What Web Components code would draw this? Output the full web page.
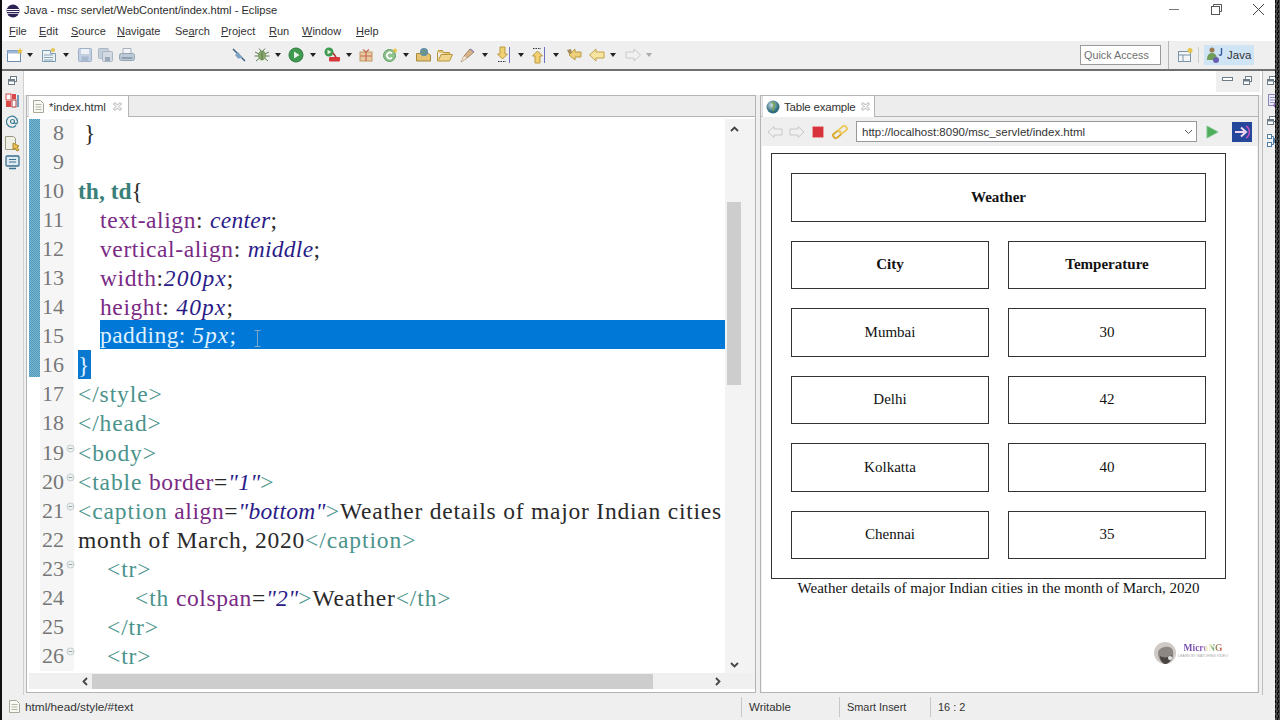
<!DOCTYPE html>
<html><head><meta charset="utf-8"><title>Eclipse</title>
<style>
html,body{margin:0;padding:0;height:720px;overflow:hidden;background:#efefef;font-family:"Liberation Sans",Arial,sans-serif;font-size:12px;color:#333}
</style></head><body>
<ec-window></ec-window>
<script>
const I={
 newf:'<svg width="20" height="16" viewBox="0 0 20 16"><rect x="1.500" y="3.500" width="13" height="11" fill="#fff" stroke="#6b8bb0"/><rect x="1.500" y="3.500" width="13" height="3" fill="#9db8d6"/><path d="M14 1l1 2 2 .3-1.500 1.500.4 2-1.900-1-1.900 1 .4-2L11 3.300 13 3z" fill="#e8c040"/></svg>',
 newp:'<svg width="18" height="16" viewBox="0 0 18 16"><path d="M1.500 3.500h8v3h5v8h-13z" fill="#eef3f6" stroke="#7d9bb0"/><path d="M3 8h9M3 10.500h9M3 13h9" stroke="#8aa5b8"/><circle cx="12" cy="3" r="2" fill="#e6c650"/></svg>',
 save:'<svg width="16" height="16" viewBox="0 0 16 16"><rect x="1.500" y="1.500" width="13" height="13" rx="1" fill="#c3d0e2" stroke="#9fb0c8"/><rect x="4" y="2" width="8" height="5" fill="#eef2f7"/><rect x="4.500" y="9.500" width="7" height="5" fill="#a9b9cf"/></svg>',
 saveall:'<svg width="18" height="16" viewBox="0 0 18 16"><rect x="1.500" y="1.500" width="10" height="10" rx="1" fill="#c5cfdb" stroke="#aab6c4"/><rect x="5.500" y="4.500" width="10" height="10" rx="1" fill="#d3dae3" stroke="#aab6c4"/><rect x="8" y="10" width="5" height="4" fill="#9aa8b8"/></svg>',
 print:'<svg width="18" height="16" viewBox="0 0 18 16"><path d="M5 7V1.500h8V7" fill="#f2f4f7" stroke="#a5b2c0"/><rect x="1.500" y="6.500" width="15" height="7" rx="2" fill="#bcc9d6" stroke="#93a3b3"/><rect x="3.500" y="10" width="11" height="2" fill="#8ea0b2"/></svg>',
 skip:'<svg width="16" height="16" viewBox="0 0 16 16"><path d="M2 2l12 12" stroke="#3f6080" stroke-width="1.500"/><path d="M4 8l3-3 5 6-5 .5z" fill="#7fa3c5"/></svg>',
 bug:'<svg width="18" height="16" viewBox="0 0 18 16"><ellipse cx="9" cy="8.500" rx="4" ry="5" fill="#86a56a"/><path d="M9 4v9M2 5l4 2M16 5l-4 2M1.500 9h4M16.500 9h-4M3 14l3-2.500M15 14l-3-2.500M6 1.500l2 2.500M12 1.500L10 4" stroke="#5f7f55" fill="none"/></svg>',
 run:'<svg width="16" height="16" viewBox="0 0 16 16"><circle cx="8" cy="8" r="7" fill="#3f9a4f"/><circle cx="8" cy="8" r="7" fill="none" stroke="#2e7a40"/><path d="M6 4.500l5.500 3.500L6 11.500z" fill="#e8f4e8"/></svg>',
 runext:'<svg width="18" height="16" viewBox="0 0 18 16"><circle cx="6" cy="5" r="4.500" fill="#3f9a4f"/><path d="M4.500 2.800L8.500 5l-4 2.200z" fill="#e8f4e8"/><rect x="6" y="10" width="11" height="4.500" rx="1" fill="#d63a3a"/><path d="M10 6l3 4" stroke="#a33" stroke-width="1.500"/></svg>',
 pkg:'<svg width="16" height="16" viewBox="0 0 16 16"><rect x="2" y="5" width="12" height="9" fill="#e8c8a0" stroke="#c09a68"/><path d="M2 9h12M8 5v9" stroke="#c86a50" stroke-width="1.200"/><path d="M5 2.500l3 2.500 3-2.500" fill="none" stroke="#c86a50" stroke-width="1.200"/></svg>',
 cls:'<svg width="16" height="16" viewBox="0 0 16 16"><circle cx="7.500" cy="8.500" r="6" fill="#8fc28f" stroke="#5fa065"/><path d="M10 6.300a3 3 0 1 0 0 4.400" fill="none" stroke="#fff" stroke-width="1.600"/><path d="M13 .8l.8 1.700 1.800.2-1.300 1.300.3 1.800-1.600-.9-1.600.9.300-1.800-1.300-1.300 1.800-.2z" fill="#e6c040"/></svg>',
 globefolder:'<svg width="18" height="16" viewBox="0 0 18 16"><path d="M1.500 6.500h12l2 1.500v6h-14z" fill="#e4c472" stroke="#a98a3c"/><circle cx="9" cy="5" r="4" fill="#5f8fa8"/><path d="M6 3.500c2 1 3 0 5-.5M6 6c2 1 4 0 5 0" stroke="#7da25a" fill="none"/></svg>',
 folder:'<svg width="18" height="16" viewBox="0 0 18 16"><path d="M1.500 5.500v8.500h12l3-6.500H5l-2 5" fill="#f0d58a" stroke="#b49440"/><path d="M1.500 5.500l1-2h4l1 2h6v2" fill="#e8c870" stroke="#b49440"/></svg>',
 pen:'<svg width="18" height="16" viewBox="0 0 18 16"><path d="M2 15l3-6 6-7 4 3-7 6z" fill="#d8b48a" stroke="#a88660"/><path d="M2 15l3-6 3 2z" fill="#efe2d0"/><path d="M11 2l4 3" stroke="#8f8fb0" stroke-width="1.500"/></svg>',
 down:'<svg width="16" height="18" viewBox="0 0 16 18"><path d="M5 1h5v7h2.500L7.500 13 2.500 8H5z" fill="#f0d070" stroke="#bb9a3c"/><path d="M3 15.500h8" stroke="#333" stroke-dasharray="1.500 1"/><path d="M14.500 1v16" stroke="#7070c0"/></svg>',
 up:'<svg width="16" height="18" viewBox="0 0 16 18"><path d="M5 17h5v-7h2.500L7.500 5 2.500 10H5z" fill="#f0d070" stroke="#bb9a3c"/><path d="M3 2.500h8" stroke="#333" stroke-dasharray="1.500 1"/><path d="M14.500 1v16" stroke="#7070c0"/></svg>',
 last:'<svg width="18" height="16" viewBox="0 0 18 16"><path d="M9 2L3 8l6 5V10h6V5H9z" fill="#efd07a" stroke="#b99a45"/><path d="M1 3l4-1 1 4-3 1z" fill="#a88a5a"/></svg>',
 back:'<svg width="18" height="16" viewBox="0 0 18 16"><path d="M8 2L1.500 8 8 14v-3h8V5H8z" fill="#f6e4a0" stroke="#c4a24a"/></svg>',
 fwd:'<svg width="18" height="16" viewBox="0 0 18 16"><path d="M10 2l6.500 6L10 14v-3H2V5h8z" fill="#f1f1f1" stroke="#c9c9c9"/></svg>',
 bback:'<svg width="16" height="14" viewBox="0 0 16 14"><path d="M7 1.500L1 7l6 5.500V10h8V4H7z" fill="#f0f0f0" stroke="#c8c8c8"/></svg>',
 bfwd:'<svg width="16" height="14" viewBox="0 0 16 14"><path d="M9 1.500L15 7l-6 5.500V10H1V4h8z" fill="#f0f0f0" stroke="#c8c8c8"/></svg>',
 stop:'<svg width="14" height="14" viewBox="0 0 14 14"><rect x="1.500" y="1.500" width="11" height="11" rx="1" fill="#d8323c" stroke="#e8a0a0"/></svg>',
 refresh:'<svg width="18" height="16" viewBox="0 0 18 16"><rect x="2" y="8" width="8" height="5" rx="2" transform="rotate(-38 6 10.500)" fill="none" stroke="#d8ac30" stroke-width="2"/><rect x="8" y="3" width="8" height="5" rx="2" transform="rotate(-38 12 5.500)" fill="none" stroke="#ecca60" stroke-width="2"/></svg>',
 go:'<svg width="14" height="14" viewBox="0 0 14 14"><path d="M2 1l11 6-11 6z" fill="#4fae5c" stroke="#7cc488"/></svg>',
 ext:'<svg width="20" height="20" viewBox="0 0 20 20"><rect width="20" height="20" fill="#24479c"/><path d="M3 10h9M9 5.500L14 10l-5 4.500" fill="none" stroke="#f0d8f4" stroke-width="2"/><path d="M14 4a7 7 0 0 1 0 12" fill="none" stroke="#c050c0" stroke-width="1.500"/></svg>',
 persp:'<svg width="16" height="16" viewBox="0 0 16 16"><rect x="1.500" y="4.500" width="12" height="10" fill="#f4f6f8" stroke="#7b95aa"/><path d="M1.500 8h12M6 8v6.500" stroke="#7b95aa"/><circle cx="13" cy="3.500" r="2.500" fill="#e6c650"/></svg>',
 java:'<svg width="20" height="18" viewBox="0 0 20 18"><circle cx="6" cy="4" r="2.500" fill="#9a7a50"/><path d="M1 14c0-5 2-7 5-7s5 2 5 7z" fill="#6f9e58"/><circle cx="10" cy="14" r="3" fill="#6a5fb0"/><path d="M15.500 2v6c0 1.500-2 1.500-2.500.5" fill="none" stroke="#3a5a9a" stroke-width="1.400"/></svg>',
 doc:'<svg width="13" height="15" viewBox="0 0 13 15"><path d="M1.500 1.500h7l3 3v9h-10z" fill="#f8f8f4" stroke="#a8a89a"/><path d="M3.500 5.500h6M3.500 8h6M3.500 10.500h6" stroke="#b5b5a5"/></svg>',
 close:'<svg width="11" height="11" viewBox="0 0 11 11"><path d="M1.500 3L3 1.500l2.500 2.500L8 1.500 9.500 3 7 5.500 9.500 8 8 9.500 5.500 7 3 9.500 1.500 8 4 5.500z" fill="#f6f6f6" stroke="#b0b0b0"/></svg>',
 globe:'<svg width="14" height="14" viewBox="0 0 14 14"><defs><radialGradient id="g" cx=".4" cy=".35"><stop offset="0" stop-color="#c9dde0"/><stop offset="1" stop-color="#2f6f80"/></radialGradient></defs><circle cx="7" cy="7" r="6.500" fill="url(#g)"/><path d="M6 2c2 1 3 2 2 4-1 1 0 3-1 5" stroke="#7aa24a" stroke-width="1.500" fill="none"/></svg>',
 eclipse:'<svg width="14" height="14" viewBox="0 0 14 14"><circle cx="7" cy="7" r="6.500" fill="#2c2255"/><path d="M.8 5.500h12.400M.6 7.500h12.800" stroke="#fff"/><path d="M1 9.500h12" stroke="#e8e8f0" stroke-width=".8"/></svg>',
 restore:'<svg width="11" height="11" viewBox="0 0 11 11"><rect x="3.500" y="1.500" width="6" height="5" fill="#fff" stroke="#6c7c88"/><rect x="1.500" y="4.500" width="6" height="5" fill="#fff" stroke="#6c7c88"/><path d="M1.500 5.500h6" stroke="#6c7c88" stroke-width="2"/></svg>',
 minv:'<svg width="11" height="8" viewBox="0 0 11 8"><rect x=".5" y="1.500" width="10" height="3" fill="#fff" stroke="#6c7c88"/></svg>',
 t1:'<svg width="15" height="15" viewBox="0 0 15 15"><rect x="1" y="1" width="5" height="6" fill="#fff" stroke="#d84848"/><rect x="7" y="1" width="4" height="5" fill="#d84848"/><rect x="1" y="8" width="5" height="6" fill="#d84848"/><rect x="7" y="7" width="4" height="7" fill="#fff" stroke="#b03838"/><path d="M13 2v12" stroke="#4a7fa8" stroke-width="1.500"/></svg>',
 t2:'<svg width="13" height="13" viewBox="0 0 13 13"><path d="M10 10.500a5.500 5.500 0 1 1 1.500-4c0 3-3 3-3 .5" fill="none" stroke="#3a7d94" stroke-width="1.200"/><circle cx="6.500" cy="6.500" r="2" fill="none" stroke="#3a7d94" stroke-width="1.200"/></svg>',
 t3:'<svg width="17" height="17" viewBox="0 0 17 17"><path d="M1.500 1.500h8l2 2v11h-10z" fill="#eef0e8" stroke="#9a9a80"/><path d="M9 8l6 3-2 1 2 3-2 1-2-3-2 2z" fill="#e8c050" stroke="#b08a30"/></svg>',
 t4:'<svg width="15" height="15" viewBox="0 0 15 15"><rect x="1" y="1" width="13" height="10" rx="1" fill="#dfe9f1" stroke="#3a7090" stroke-width="1.300"/><path d="M4 4.500h7M4 7h7" stroke="#3a7090"/><path d="M4 13.500h7" stroke="#3a7090" stroke-width="1.500"/></svg>',
 r1:'<svg width="14" height="15" viewBox="0 0 14 15"><rect x="2.500" y="1.500" width="9" height="11" fill="#eaeaf6" stroke="#8a88b8"/><path d="M4 4.500h6M4 7h6M4 9.500h6" stroke="#9a98c8"/><circle cx="10" cy="12" r="2.500" fill="#a060c0"/></svg>',
 r2:'<svg width="14" height="15" viewBox="0 0 14 15"><rect x="1.500" y="1.500" width="4" height="4" fill="#fff" stroke="#5080a8"/><rect x="1.500" y="9.500" width="4" height="4" fill="#fff" stroke="#5080a8"/><rect x="8.500" y="5.500" width="4" height="4" fill="#fff" stroke="#5080a8"/><path d="M5.500 3.500h2v8h-2M7.500 7.500h1" fill="none" stroke="#5080a8"/></svg>'
};
function def(name,html,init){customElements.define(name,class extends HTMLElement{constructor(){super();this.attachShadow({mode:'open'}).innerHTML=typeof html==='function'?html(this):html;if(init)init(this)}})}
def('ec-icon',e=>`<style>:host{display:inline-flex;align-items:center;justify-content:center;flex:none}svg{display:block}</style>${I[e.getAttribute('n')]||''}`);
def('ec-drop','<style>:host{display:inline-block;flex:none;width:0;height:0;border:3.500px solid transparent;border-top:4px solid #222;border-bottom:0}:host([off]){border-top-color:#aaa}</style>');

def('ec-titlebar',`<style>:host{display:flex;align-items:center;height:20px;background:#fff;font-size:11.100px;color:#2c2c2c;padding:1px 0 0 4px;box-sizing:border-box}
span{margin-left:4px;flex:1;padding-bottom:1px}
.w{display:flex;align-items:center;margin-right:1px}.b{width:42px;display:flex;justify-content:center;margin-top:-3px}</style>
<ec-icon n="eclipse"></ec-icon><span>Java - msc servlet/WebContent/index.html - Eclipse</span>
<div class="w">
<div class="b"><svg width="11" height="11" viewBox="0 0 11 11"><path d="M0 5.500h10" stroke="#777"/></svg></div>
<div class="b"><svg width="11" height="11" viewBox="0 0 11 11"><path d="M2.500 2.500V.5h8v7h-2" fill="none" stroke="#555"/><rect x=".5" y="2.500" width="8" height="8" fill="none" stroke="#555"/></svg></div>
<div class="b"><svg width="13" height="13" viewBox="0 0 13 13"><path d="M1 1l11 11M12 1L1 12" stroke="#444"/></svg></div>
</div>`);

def('ec-menubar',`<style>:host{display:flex;align-items:center;height:21px;background:#fff;font-size:11px;color:#333;padding-left:7px;box-sizing:border-box}u{text-decoration-thickness:1px;text-underline-offset:1px}span{flex:none}</style>
<span style="width:30px"><u>F</u>ile</span><span style="width:32px"><u>E</u>dit</span><span style="width:46px"><u>S</u>ource</span><span style="width:58px"><u>N</u>avigate</span><span style="width:46px">Se<u>a</u>rch</span><span style="width:48px"><u>P</u>roject</span><span style="width:33px"><u>R</u>un</span><span style="width:54px"><u>W</u>indow</span><span><u>H</u>elp</span>`);

const TB=[['newf',21],['d',14],['newp',22],['d',14],['save',20],['saveall',21],['print',113],['skip',22],['bug',22],['d',13],['run',22],['d',13],['runext',23],['d',12],['pkg',24],['cls',21],['d',12],['globefolder',21],['folder',23],['pen',23],['d',13],['down',23],['d',12],['up',23],['d',13],['last',22],['back',22],['d',14],['fwd',22],['dx',10]];
def('ec-toolbar',`<style>:host{display:flex;align-items:center;height:28px;background:#efefef;border-bottom:2px solid #6f6f6f;box-sizing:content-box;padding-left:4px;padding-right:26px}
.c{flex:none;display:flex;align-items:center}.r{margin-left:auto;display:flex;align-items:center;height:100%}
.q{width:76px;height:18px;border:1px solid #9a9a9a;background:#fff;font-size:10.800px;color:#6f6f6f;display:flex;align-items:center;padding-left:3px;margin-top:-1px}
.v{width:1px;height:100%;background:#b5b5b5;margin:0 8px 0 7px}
.j{display:flex;align-items:center;gap:1px;background:#cfe4f5;height:20px;width:50px;padding-left:2px;box-sizing:border-box;color:#333;font-size:11.500px;margin-left:5px}
.s{width:1px;height:16px;background:#ccc;margin-left:5px}</style>
${TB.map(([n,w])=>`<div class="c" style="width:${w}px">${n==='d'?'<ec-drop></ec-drop>':n==='dx'?'<ec-drop off></ec-drop>':`<ec-icon n="${n}"></ec-icon>`}</div>`).join('')}
<div class="r"><div class="q">Quick Access</div><div class="v"></div><ec-icon n="persp"></ec-icon><div class="s"></div><div class="j"><ec-icon n="java"></ec-icon>Java</div></div>`);

def('ec-trim',`<style>:host{display:flex;flex-direction:column;align-items:center;gap:7px;padding-top:4px;background:#efefef;box-sizing:border-box;border-right:1px solid #cfcfcf}:host([r]){border-right:0;border-left:1px solid #bdbdbd;align-items:flex-start;padding-left:3px}</style><slot></slot>`);

def('ec-tabfolder',e=>`<style>:host{display:flex;flex-direction:column;border:1px solid #b4b4b4;box-sizing:border-box;background:#f0f0f0;min-height:0;min-width:0}
.head{display:flex;height:21px;background:#ededed;border-bottom:1px solid #b4b4b4;box-sizing:border-box;flex:none;padding-left:1px}
.tab{display:flex;align-items:center;gap:4px;background:#fff;height:21px;padding:0 5px 0 3px;border-right:1px solid #b4b4b4;box-sizing:border-box;font-size:11.500px;color:#333;border-left:1px solid #ddd;white-space:nowrap;flex:none}
.body{flex:1;min-height:0;display:flex;flex-direction:column}</style>
<div class="head"><div class="tab" style="width:${e.getAttribute('tw')}px"><ec-icon n="${e.getAttribute('ic')}"></ec-icon><span style="letter-spacing:${e.getAttribute('ls')||0}px">${e.getAttribute('label')}</span><ec-icon n="close" style="margin-left:auto"></ec-icon></div></div>
<div class="body"><slot></slot></div>`);

const LINES=[
 [8,'',6,'}'],
 [9,'',0,''],
 [10,'',0,'<span class="tb">th, td</span><span class="br">{</span>'],
 [11,'',22,'<span class="a">text-align</span>: <i>center</i>;'],
 [12,'',22,'<span class="a">vertical-align</span>: <i>middle</i>;'],
 [13,'',22,'<span class="a">width</span>:<i class="w">200px</i>;'],
 [14,'',22,'<span class="a">height</span>: <i class="w">40px</i>;'],
 [15,'sel',22,'padding: <i class="w">5px</i>;'],
 [16,'end',0,'<mark>}</mark>'],
 [17,'',0,'<span class="t">&lt;/style&gt;</span>'],
 [18,'',0,'<span class="t">&lt;/head&gt;</span>'],
 [19,'f',0,'<span class="t">&lt;body&gt;</span>'],
 [20,'f',0,'<span class="t">&lt;table</span> <span class="a">border</span>=<i>"1"</i><span class="t">&gt;</span>'],
 [21,'f',0,'<span class="t">&lt;caption</span> <span class="a">align</span>=<i>"bottom"</i><span class="t">&gt;</span>Weather details of major Indian cities'],
 [22,'',0,'month of March, 2020<span class="t">&lt;/caption&gt;</span>'],
 [23,'f',29,'<span class="t">&lt;tr&gt;</span>'],
 [24,'',57,'<span class="t">&lt;th</span> <span class="a">colspan</span>=<i>"2"</i><span class="t">&gt;</span>Weather<span class="t">&lt;/th&gt;</span>'],
 [25,'',29,'<span class="t">&lt;/tr&gt;</span>'],
 [26,'f',29,'<span class="t">&lt;tr&gt;</span>']
];
def('ec-code',`<style>:host{display:block;font-family:"Liberation Serif","Times New Roman",serif;font-size:23.500px;letter-spacing:.78px;color:#2a2a2a;overflow:hidden;flex:1;min-width:0;font-variant-numeric:oldstyle-nums}
.l{display:flex;height:29.050px;line-height:28px;white-space:pre}
.n{width:24px;flex:none;color:#777;text-align:right;background:#f6f6f6;letter-spacing:0;font-size:22px}
.f{width:14px;flex:none;position:relative;background:linear-gradient(90deg,#f6f6f6 10px,#fff 10px)}
.f svg{position:absolute;left:2px;top:5px}
.x{flex:1;min-width:0;overflow:hidden;position:relative}
.tb{color:#3a7f7a;font-weight:bold;letter-spacing:0}.br{letter-spacing:0}.t{color:#4a938b;letter-spacing:.9px}.a{color:#7a2a85;letter-spacing:.6px}i{color:#2a1c88;font-style:italic;letter-spacing:.3px}
i.w{letter-spacing:1.100px}
.sel{background:#0078d7;color:#dff1ff;position:absolute;left:22px;right:0;top:-2px;height:29px;line-height:30px;letter-spacing:.45px}
.sel i{color:#dff1ff}
.cur{position:absolute;left:154px;top:10px}
mark{background:#0a78cf;color:#dff1ff;display:inline-block;padding:1px 2px 0 0;line-height:28px;position:relative;top:-1px;letter-spacing:0}
.x.s{overflow:visible}
</style><div id="c"></div>`,e=>{
 e.shadowRoot.getElementById('c').innerHTML=LINES.map(([n,k,ind,h])=>{
  const fold=k==='f'?'<svg width="9" height="9" viewBox="0 0 9 9"><circle cx="4.500" cy="4.500" r="3.500" fill="#eef1f1" stroke="#c4cccc"/><path d="M2.500 4.500h4" stroke="#99a5a5"/></svg>':'';
  const body=k==='sel'?`<div class="sel">${h}<svg class="cur" width="7" height="17" viewBox="0 0 7 17"><path d="M.5.500h6M3.500.500v16M.5 16.500h6" stroke="#7fa8c8" fill="none"/></svg></div>`:`<span style="padding-left:${ind}px">${h}</span>`;
  return `<div class="l"><div class="n">${n}</div><div class="f">${fold}</div><div class="x${k==='sel'||k==='end'?' s':''}">${body}</div></div>`;
 }).join('');
});
def('ec-sbv',`<style>:host{display:flex;flex-direction:column;width:30px;flex:none;background:#f3f3f3;box-sizing:border-box;padding-right:14px}
.a{height:20px;display:flex;align-items:center;justify-content:center;flex:none;padding-left:2px}
.a.b{height:16px;margin-top:auto}
.sp{flex:none;height:63px}.th{height:183px;width:14px;background:#cdcdcd;flex:none;margin-left:2px}</style>
<div class="a"><svg width="9" height="6" viewBox="0 0 9 6"><path d="M1 5l3.500-3.500L8 5" fill="none" stroke="#444" stroke-width="1.800"/></svg></div>
<div class="sp"></div><div class="th"></div>
<div class="a b"><svg width="9" height="6" viewBox="0 0 9 6"><path d="M1 1l3.500 3.500L8 1" fill="none" stroke="#444" stroke-width="1.800"/></svg></div>`);
def('ec-sbh',`<style>:host{display:flex;align-items:center;height:16px;background:#f0f0f0;flex:none}
.pad{width:49px;flex:none}.a{width:14px;display:flex;justify-content:center;flex:none}
.th{width:561px;height:15px;background:#cdcdcd;flex:none}.f{flex:1}</style>
<div class="pad"></div><div class="a"><svg width="6" height="9" viewBox="0 0 6 9"><path d="M5 1L1.500 4.500 5 8" fill="none" stroke="#444" stroke-width="1.800"/></svg></div>
<div class="th"></div><div class="f"></div><div class="a" style="margin-right:30px"><svg width="6" height="9" viewBox="0 0 6 9"><path d="M1 1l3.500 3.500L1 8" fill="none" stroke="#444" stroke-width="1.800"/></svg></div>`);

def('ec-editor',`<style>:host{display:flex;flex-direction:column;flex:1;min-height:0;background:#fff;padding:2px 0 3px 2px;box-sizing:border-box}
.m{flex:1;min-height:0;display:flex;background:#fff}
.ruler{width:11px;flex:none;height:258px;background:#5fa5c5;background-image:repeating-conic-gradient(#7ab8d0 0 25%,#4f98bb 0 50%);background-size:2px 2px}
.wrap{flex:1;display:flex;min-width:0;min-height:0;overflow:hidden}</style>
<div class="m"><div class="ruler"></div><div class="wrap"><ec-code></ec-code><ec-sbv></ec-sbv></div></div><ec-sbh></ec-sbh>`);

def('ec-url',`<style>:host{display:flex;align-items:center;height:19px;border:1px solid #999;background:#fff;font-size:11.500px;color:#333;padding-left:5px;box-sizing:content-box;flex:none;width:334px}span{flex:1}</style>
<span>http://localhost:8090/msc_servlet/index.html</span><svg width="9" height="6" viewBox="0 0 9 6" style="margin-right:3px"><path d="M1 1l3.500 3.500L8 1" fill="none" stroke="#555"/></svg>`);

def('ec-weather',`<style>:host{display:block;font-family:"Liberation Serif","Times New Roman",serif;font-size:15.040px;color:#111}
table{border:1px solid #333;border-spacing:19px;border-collapse:separate;width:455px;table-layout:fixed;box-sizing:border-box}
td,th{border:1px solid #333;height:48.500px;padding:0;text-align:center;vertical-align:middle;box-sizing:border-box}
.cap{width:455px;text-align:center;white-space:nowrap;margin-top:1px}</style>
<table><tr><th colspan="2">Weather</th></tr><tr><th>City</th><th>Temperature</th></tr>
<tr><td>Mumbai</td><td>30</td></tr><tr><td>Delhi</td><td>42</td></tr><tr><td>Kolkatta</td><td>40</td></tr><tr><td>Chennai</td><td>35</td></tr></table>
<div class="cap">Weather details of major Indian cities in the month of March, 2020</div>`);

def('ec-logo',`<style>:host{display:flex;align-items:center;gap:2px;position:absolute;right:29px;bottom:27px}
.t{display:flex;flex-direction:column;align-items:center;font-family:"Liberation Serif",serif;line-height:1;margin-top:-3px}
.m{font-size:9.500px;font-weight:bold;background:linear-gradient(90deg,#6a48a8 0,#8a58b8 52%,#f2ecb0 60%,#f2ecb0 68%,#78b878 75%,#d04848 100%);-webkit-background-clip:text;background-clip:text;color:transparent}
.s{font-size:3.600px;color:#a8a8a8;margin-top:2px;white-space:nowrap;font-family:"Liberation Sans",sans-serif}</style>
<svg width="22" height="24" viewBox="0 0 22 24"><circle cx="11" cy="12" r="11" fill="#cfcac6"/><path d="M4 12c0-7 14-9 15-2 1 5-1 12-7 13-4 0-8-5-8-11z" fill="#8d8783"/><path d="M6 15c3 2 8 2 12-1-1 6-4 9-7 9-3-1-5-4-5-8z" fill="#4a4542"/><circle cx="16" cy="17" r="2" fill="#e8e8e8"/></svg>
<div class="t"><div class="m">MicroNG</div><div class="s">LEARN BY WATCHING VIDEO</div></div>`);

def('ec-browser',`<style>:host{display:flex;flex-direction:column;flex:1;min-height:0;position:relative}
.tb{display:flex;align-items:center;height:29px;background:#efefef;flex:none;padding-left:6px;box-sizing:border-box}
.tb ec-icon{margin-right:6px}
.pg{flex:1;min-height:0;background:#fff;margin:0 1px 0 1px;padding:7px 0 0 9px;position:relative}</style>
<div class="tb"><ec-icon n="bback"></ec-icon><ec-icon n="bfwd"></ec-icon><ec-icon n="stop"></ec-icon><ec-icon n="refresh" style="margin-right:7px"></ec-icon><ec-url></ec-url><ec-icon n="go" style="margin:0 0 0 8px"></ec-icon><ec-icon n="ext" style="margin:0 0 0 13px"></ec-icon></div>
<div class="pg"><ec-weather></ec-weather><ec-logo></ec-logo></div>`);

def('ec-status',`<style>:host{display:flex;align-items:center;height:25px;background:#efefef;font-size:11.500px;color:#333;padding:0 0 2px 6px;box-sizing:border-box}
.h{display:flex;align-items:center;gap:4px;width:733px;flex:none;font-size:11.800px}
.c{border-left:1px solid #c8c8c8;height:20px;display:flex;align-items:center;padding-left:7px;box-sizing:border-box;flex:none}</style>
<div class="h"><ec-icon n="doc"></ec-icon>html/head/style/#text</div>
<div class="c" style="width:98px">Writable</div><div class="c" style="width:91px;font-size:10.900px">Smart Insert</div><div class="c" style="font-size:10.900px">16 : 2</div>`);

def('ec-window',`<style>:host{display:flex;flex-direction:column;width:1280px;height:720px;background:#efefef;position:relative;box-sizing:border-box;border-left:2px solid #111;overflow:hidden}
.main{flex:1;min-height:0;display:grid;grid-template-columns:22px 1fr 18px;background:#efefef}
.center{display:flex;flex-direction:column;min-width:0;min-height:0;background:#fff}
.mm{display:flex;justify-content:flex-end;height:24px;flex:none;background:#fff}
.mb{display:flex;align-items:center;gap:9px;height:21px;background:#efefef;padding:0 0 3px 6px;box-sizing:border-box;width:44px;margin-right:2px}
.areas{flex:1;min-height:0;display:grid;grid-template-columns:730px 499px;gap:4px;background:#efefef;padding:0 0 2px 2px;box-sizing:border-box}
.noise{position:absolute;right:0;top:0;bottom:0;width:5px;background-color:#111;background-image:repeating-conic-gradient(#4a4a4a 0 25%,#0a0a0a 0 50%),linear-gradient(#111,#111);background-size:3px 5px}
</style>
<ec-titlebar></ec-titlebar><ec-menubar></ec-menubar><ec-toolbar></ec-toolbar>
<div class="main">
<ec-trim><ec-icon n="restore"></ec-icon><ec-icon n="t1"></ec-icon><ec-icon n="t2"></ec-icon><ec-icon n="t3"></ec-icon><ec-icon n="t4" style="margin-top:-4px"></ec-icon></ec-trim>
<div class="center">
<div class="mm"><div class="mb"><ec-icon n="minv"></ec-icon><ec-icon n="restore"></ec-icon></div></div>
<div class="areas">
<ec-tabfolder tw="101" ic="doc" label="*index.html"><ec-editor></ec-editor></ec-tabfolder>
<ec-tabfolder tw="113" ic="globe" ls="-.2" label="Table example"><ec-browser></ec-browser></ec-tabfolder>
</div></div>
<ec-trim r><ec-icon n="restore"></ec-icon><ec-icon n="r1"></ec-icon><ec-icon n="restore"></ec-icon><ec-icon n="r2"></ec-icon></ec-trim>
</div>
<ec-status></ec-status><div class="noise"></div>`);
</script></body></html>
